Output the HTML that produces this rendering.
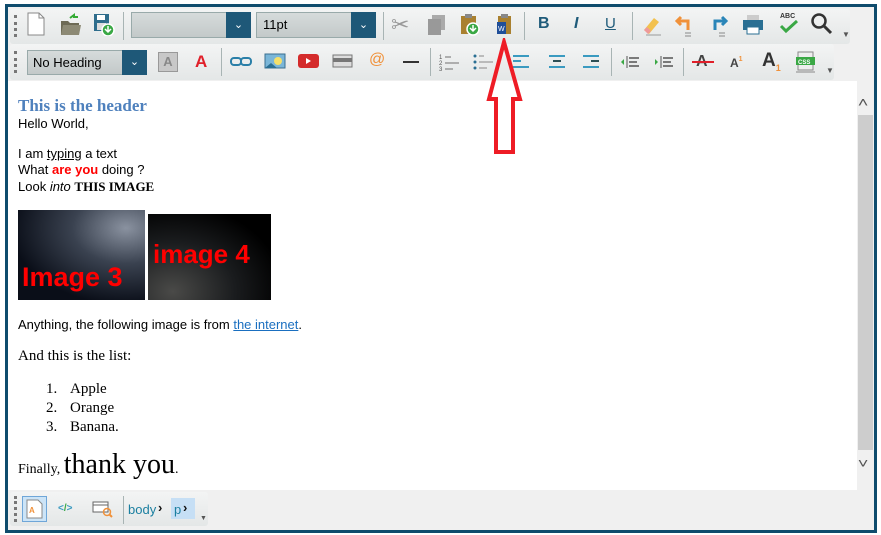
<!DOCTYPE html>
<html><head><meta charset="utf-8"><style>
*{margin:0;padding:0;box-sizing:border-box}
body{width:881px;height:535px;background:#fff;position:relative;overflow:hidden;font-family:"Liberation Sans",sans-serif}
.a{position:absolute}
.frame{left:5px;top:4px;width:872px;height:529px;border:3px solid #0f4c6d;background:#f0f0f0}
.tb{background:linear-gradient(#f3f4f4,#e4e7e7);border-radius:3px}
.grip{width:3px;border-left:3px dotted #777}
.sep{width:1px;background:#a8b4b4}
.combo{background:linear-gradient(#d6dbdb,#c3c9c9);border:1px solid #9aa}
.dd{background:#1e5878;color:#fff;font-size:11px;text-align:center}
.t{font-size:13px;color:#000;white-space:nowrap}
.s{font-family:"Liberation Serif",serif;white-space:nowrap}
</style></head><body>
<div class="a frame"></div>
<!-- toolbar 1 -->
<div class="a tb" style="left:10px;top:9px;width:840px;height:35px"></div>
<div class="a tb" style="left:10px;top:44px;width:824px;height:36px"></div>
<div class="a grip" style="left:14px;top:15px;height:22px"></div>
<div class="a grip" style="left:14px;top:51px;height:22px"></div>
<!-- new doc -->
<svg class="a" style="left:26px;top:12px" width="20" height="24"><path d="M2 1h11l5 5v17H2z" fill="#fff" stroke="#888"/><path d="M13 1v5h5" fill="none" stroke="#888"/></svg>
<svg class="a" style="left:60px;top:12px" width="22" height="24"><path d="M10 6l4-3v2h4" stroke="#3a3" fill="none" stroke-width="2"/><path d="M1 9h7l2 2h9v12H1z" fill="#6d6a55"/><path d="M3 13h18l-2 10H1z" fill="#8d8a75"/></svg>
<svg class="a" style="left:93px;top:12px" width="22" height="24"><rect x="1" y="2" width="15" height="17" fill="#2f6d8c"/><rect x="4" y="3" width="8" height="5" fill="#fff"/><rect x="4" y="11" width="9" height="7" fill="#ddd"/><circle cx="15" cy="18" r="6" fill="#3aa845" stroke="#fff" stroke-width="1.5"/><path d="M15 14v6M12 17l3 3 3-3" stroke="#fff" fill="none" stroke-width="1.5"/></svg>
<div class="a sep" style="left:123px;top:12px;height:28px"></div>
<div class="a combo" style="left:131px;top:12px;width:120px;height:26px"></div>
<div class="a dd" style="left:226px;top:12px;width:25px;height:26px;line-height:26px">&#8964;</div>
<div class="a combo" style="left:256px;top:12px;width:120px;height:26px"></div>
<div class="a t" style="left:263px;top:17px;font-size:13px">11pt</div>
<div class="a dd" style="left:351px;top:12px;width:25px;height:26px;line-height:26px">&#8964;</div>
<div class="a sep" style="left:383px;top:12px;height:28px"></div>
<div class="a" style="left:391px;top:12px;font-size:22px;color:#999">&#9986;</div>
<svg class="a" style="left:427px;top:14px" width="20" height="22"><rect x="5" y="1" width="13" height="15" fill="#aaa"/><rect x="1" y="5" width="13" height="16" fill="#999"/></svg>
<svg class="a" style="left:459px;top:13px" width="24" height="24"><rect x="2" y="3" width="15" height="18" fill="#a9802f"/><rect x="6" y="1" width="7" height="4" fill="#888"/><circle cx="14" cy="16" r="6" fill="#3aa845" stroke="#fff" stroke-width="1.5"/><path d="M14 12v6M11 15l3 3 3-3" stroke="#fff" fill="none" stroke-width="1.5"/></svg>
<svg class="a" style="left:496px;top:13px" width="18" height="24"><rect x="2" y="3" width="13" height="18" fill="#a9802f"/><rect x="5" y="1" width="7" height="4" fill="#888"/><rect x="1" y="9" width="9" height="12" fill="#1f4e99"/><text x="2" y="18" font-size="7" fill="#fff" font-family="Liberation Sans">W</text></svg>
<div class="a sep" style="left:524px;top:12px;height:28px"></div>
<div class="a" style="left:538px;top:15px;font-size:16px;font-weight:bold;color:#1f5b7a">B</div>
<div class="a" style="left:574px;top:15px;font-size:16px;font-style:italic;font-weight:bold;color:#1f5b7a">I</div>
<div class="a" style="left:605px;top:15px;font-size:15px;text-decoration:underline;color:#1f5b7a">U</div>
<div class="a sep" style="left:632px;top:12px;height:28px"></div>
<svg class="a" style="left:640px;top:14px" width="22" height="22"><path d="M4 16l10-12 5 4-10 12z" fill="#f2c14e"/><path d="M4 16l4 4 3-3-4-4z" fill="#e99"/><path d="M6 21h15" stroke="#999"/></svg>
<svg class="a" style="left:675px;top:13px" width="22" height="24"><path d="M6 4L2 8l4 4M2 8h11v9" stroke="#f0913a" stroke-width="3" fill="none"/><path d="M10 20h6M10 23h6" stroke="#888"/></svg>
<svg class="a" style="left:708px;top:13px" width="22" height="24"><path d="M14 4l4 4-4 4M18 8H7v9" stroke="#2a85b8" stroke-width="3" fill="none"/><path d="M11 20h6M11 23h6" stroke="#888"/></svg>
<svg class="a" style="left:742px;top:14px" width="22" height="22"><rect x="5" y="1" width="12" height="6" fill="#ccc"/><rect x="1" y="6" width="20" height="10" fill="#2a6f93"/><rect x="5" y="13" width="12" height="7" fill="#fff" stroke="#2a6f93"/></svg>
<div class="a" style="left:780px;top:13px;font-size:7px;color:#333;font-weight:bold">ABC</div>
<svg class="a" style="left:778px;top:20px" width="22" height="14"><path d="M3 6l5 5L19 1" stroke="#3aa845" stroke-width="3" fill="none"/></svg>
<svg class="a" style="left:810px;top:12px" width="24" height="24"><circle cx="9" cy="9" r="6.5" stroke="#333" stroke-width="2.5" fill="none"/><path d="M14 14l7 7" stroke="#333" stroke-width="3"/></svg>
<div class="a" style="left:842px;top:30px;font-size:8px;color:#555">&#9660;</div>
<!-- toolbar 2 -->
<div class="a combo" style="left:27px;top:50px;width:120px;height:25px"></div>
<div class="a t" style="left:33px;top:55px">No Heading</div>
<div class="a dd" style="left:122px;top:50px;width:25px;height:25px;line-height:25px">&#8964;</div>
<div class="a" style="left:158px;top:52px;width:20px;height:20px;background:#c8c8c8;border:1px solid #999;color:#888;font-weight:bold;font-size:13px;text-align:center;line-height:18px">A</div>
<div class="a" style="left:195px;top:52px;color:#e0202a;font-weight:bold;font-size:17px">A</div>
<div class="a sep" style="left:221px;top:48px;height:28px"></div>
<svg class="a" style="left:230px;top:56px" width="22" height="12"><rect x="1" y="2" width="10" height="7" rx="3" stroke="#2a7fa8" stroke-width="2" fill="none"/><rect x="11" y="2" width="10" height="7" rx="3" stroke="#2a7fa8" stroke-width="2" fill="none"/></svg>
<svg class="a" style="left:264px;top:53px" width="22" height="17"><rect x="1" y="1" width="20" height="14" fill="#7ab6d8" stroke="#3a6f8f"/><circle cx="14" cy="8" r="4" fill="#f4e06a"/><path d="M1 15l6-5 6 5z" fill="#2a6f93"/></svg>
<svg class="a" style="left:298px;top:54px" width="22" height="15"><rect x="0" y="0" width="21" height="14" rx="3" fill="#d42b2b"/><path d="M8 4v6l5-3z" fill="#fff"/></svg>
<svg class="a" style="left:332px;top:54px" width="22" height="15"><rect x="1" y="1" width="19" height="12" fill="#ddd" stroke="#777"/><rect x="1" y="4" width="19" height="4" fill="#777"/></svg>
<div class="a" style="left:369px;top:51px;color:#f0913a;font-size:16px">@</div>
<div class="a" style="left:403px;top:61px;width:16px;height:2px;background:#333"></div>
<div class="a sep" style="left:430px;top:48px;height:28px"></div>
<svg class="a" style="left:439px;top:53px" width="24" height="18"><text x="0" y="6" font-size="6" fill="#555" font-family="Liberation Sans">1</text><text x="0" y="12" font-size="6" fill="#555" font-family="Liberation Sans">2</text><text x="0" y="18" font-size="6" fill="#555" font-family="Liberation Sans">3</text><path d="M6 4h6M6 10h14M6 16h8" stroke="#999" stroke-width="1.5"/></svg>
<svg class="a" style="left:473px;top:53px" width="24" height="18"><circle cx="2" cy="3" r="1.5" fill="#2a6f93"/><circle cx="2" cy="9" r="1.5" fill="#2a6f93"/><circle cx="2" cy="15" r="1.5" fill="#2a6f93"/><path d="M6 3h5M6 9h14M6 15h8" stroke="#aaa" stroke-width="1.5"/></svg>
<svg class="a" style="left:513px;top:55px" width="18" height="14"><path d="M0 1h16M0 6h8M0 12h16" stroke="#3a9ac0" stroke-width="2"/></svg>
<svg class="a" style="left:548px;top:55px" width="18" height="14"><path d="M1 1h16M5 6h8M1 12h16" stroke="#3a9ac0" stroke-width="2"/><path d="M5 6h8" stroke="#2d4f55" stroke-width="2"/></svg>
<svg class="a" style="left:582px;top:55px" width="18" height="14"><path d="M1 1h16M1 12h16" stroke="#3a9ac0" stroke-width="2"/><path d="M9 6h8" stroke="#2d4f55" stroke-width="2"/></svg>
<div class="a sep" style="left:611px;top:48px;height:28px"></div>
<svg class="a" style="left:619px;top:54px" width="22" height="16"><path d="M5 5l-3 3 3 3z" fill="#3aa845"/><path d="M8 2v12" stroke="#555"/><path d="M10 4h10M10 8h8M10 12h10" stroke="#555" stroke-width="1.5"/></svg>
<svg class="a" style="left:653px;top:54px" width="22" height="16"><path d="M2 5l3 3-3 3z" fill="#3aa845"/><path d="M8 2v12" stroke="#555"/><path d="M10 4h10M10 8h8M10 12h10" stroke="#555" stroke-width="1.5"/></svg>
<div class="a sep" style="left:683px;top:48px;height:28px"></div>
<div class="a" style="left:696px;top:53px;font-size:16px;font-weight:bold;color:#444">A</div>
<div class="a" style="left:692px;top:61px;width:22px;height:2px;background:#e0202a"></div>
<div class="a" style="left:730px;top:56px;font-size:12px;font-weight:bold;color:#444">A<span style="font-size:7px;color:#f0913a;vertical-align:6px">1</span></div>
<div class="a" style="left:762px;top:50px;font-size:19px;font-weight:bold;color:#333">A<span style="font-size:9px;color:#f0913a;vertical-align:-5px">1</span></div>
<svg class="a" style="left:795px;top:51px" width="22" height="24"><rect x="3" y="1" width="15" height="18" fill="#eee" stroke="#888"/><rect x="1" y="6" width="19" height="8" fill="#3aa845"/><text x="3" y="13" font-size="6" font-weight="bold" fill="#fff" font-family="Liberation Sans">CSS</text><path d="M1 21h19" stroke="#888"/></svg>
<div class="a" style="left:826px;top:66px;font-size:8px;color:#555">&#9660;</div>
<!-- content -->
<div class="a" style="left:8px;top:81px;width:849px;height:409px;background:#fff"></div>
<div class="a" style="left:857px;top:81px;width:17px;height:409px;background:#f0f0f0"></div>
<div class="a" style="left:858px;top:115px;width:15px;height:335px;background:#cdcdcd"></div>
<div class="a" style="left:859px;top:94px;font-size:14px;color:#555;transform:scaleX(1.3)">&#708;</div>
<div class="a" style="left:859px;top:455px;font-size:14px;color:#555;transform:scaleX(1.3)">&#709;</div>
<div class="a s" style="left:18px;top:96px;font-size:17px;font-weight:bold;color:#4f81bd">This is the header</div>
<div class="a t" style="left:18px;top:116px">Hello World,</div>
<div class="a t" style="left:18px;top:146px">I am <u>typing</u> a text</div>
<div class="a t" style="left:18px;top:162px">What <b style="color:#f00">are you</b> doing ?</div>
<div class="a t" style="left:18px;top:179px">Look <i>into</i> <b class="s" style="font-size:13px">THIS IMAGE</b></div>
<div class="a" style="left:18px;top:210px;width:127px;height:90px;background:radial-gradient(ellipse at 85% 20%,#8a92a0 0%,#3a4250 35%,#0a0e18 75%);overflow:hidden"><div style="position:absolute;left:4px;top:52px;color:#f00;font-weight:bold;font-size:27px;white-space:nowrap">Image 3</div></div>
<div class="a" style="left:148px;top:214px;width:123px;height:86px;background:radial-gradient(ellipse at 20% 90%,#4a4a48 0%,#1a1c1e 45%,#000 80%);overflow:hidden"><div style="position:absolute;left:5px;top:25px;color:#f00;font-weight:bold;font-size:26px;white-space:nowrap">image 4</div></div>
<div class="a t" style="left:18px;top:317px">Anything, the following image is from <u style="color:#1a6fc0">the internet</u>.</div>
<div class="a s" style="left:18px;top:348px;font-size:15px">And this is the list:</div>
<div class="a s" style="left:46px;top:380px;font-size:15px;line-height:19px">1.<br>2.<br>3.</div>
<div class="a s" style="left:70px;top:380px;font-size:15px;line-height:19px">Apple<br>Orange<br>Banana.</div>
<div class="a s" style="left:18px;top:449px;font-size:14px">Finally, <span style="font-size:28px">thank you</span>.</div>
<!-- arrow -->
<svg class="a" style="left:484px;top:38px" width="44" height="120"><path d="M20 4L5 61h7v92h17V61h7z" transform="translate(0,0)" fill="none"/><path d="M20 4L5 61h7v53h17V61h7z" fill="none" stroke="#ee1c25" stroke-width="4" stroke-linejoin="miter"/></svg>
<!-- bottom bar -->
<div class="a tb" style="left:10px;top:492px;width:198px;height:34px"></div>
<div class="a grip" style="left:14px;top:496px;height:26px"></div>
<div class="a" style="left:22px;top:496px;width:25px;height:26px;background:#cce4f7;border:1px solid #6fa6d8"></div>
<svg class="a" style="left:26px;top:499px" width="18" height="20"><path d="M1 1h11l4 4v14H1z" fill="#fff" stroke="#888"/><text x="3" y="14" font-size="8" fill="#f0913a" font-family="Liberation Sans" font-weight="bold">A</text></svg>
<div class="a" style="left:58px;top:503px;font-size:10px;color:#3a9ac0;font-weight:bold">&lt;<span style="color:#3aa845">/</span>&gt;</div>
<svg class="a" style="left:92px;top:500px" width="22" height="18"><rect x="1" y="2" width="15" height="10" fill="#fff" stroke="#666"/><path d="M1 5h15" stroke="#666"/><circle cx="15" cy="12" r="3.5" stroke="#f0913a" stroke-width="1.5" fill="none"/><path d="M17 14l3 3" stroke="#f0913a" stroke-width="2"/></svg>
<div class="a sep" style="left:123px;top:496px;height:28px"></div>
<div class="a" style="left:128px;top:502px;font-size:13px;color:#1a7fa0">body</div>
<div class="a" style="left:158px;top:500px;font-size:13px;font-weight:bold;color:#111">&#8250;</div>
<div class="a" style="left:171px;top:498px;width:24px;height:21px;background:#c6dff5"></div>
<div class="a" style="left:174px;top:502px;font-size:13px;color:#1a7fa0">p</div>
<div class="a" style="left:183px;top:500px;font-size:13px;font-weight:bold;color:#111">&#8250;</div>
<div class="a" style="left:200px;top:515px;font-size:7px;color:#555">&#9660;</div>
</body></html>
